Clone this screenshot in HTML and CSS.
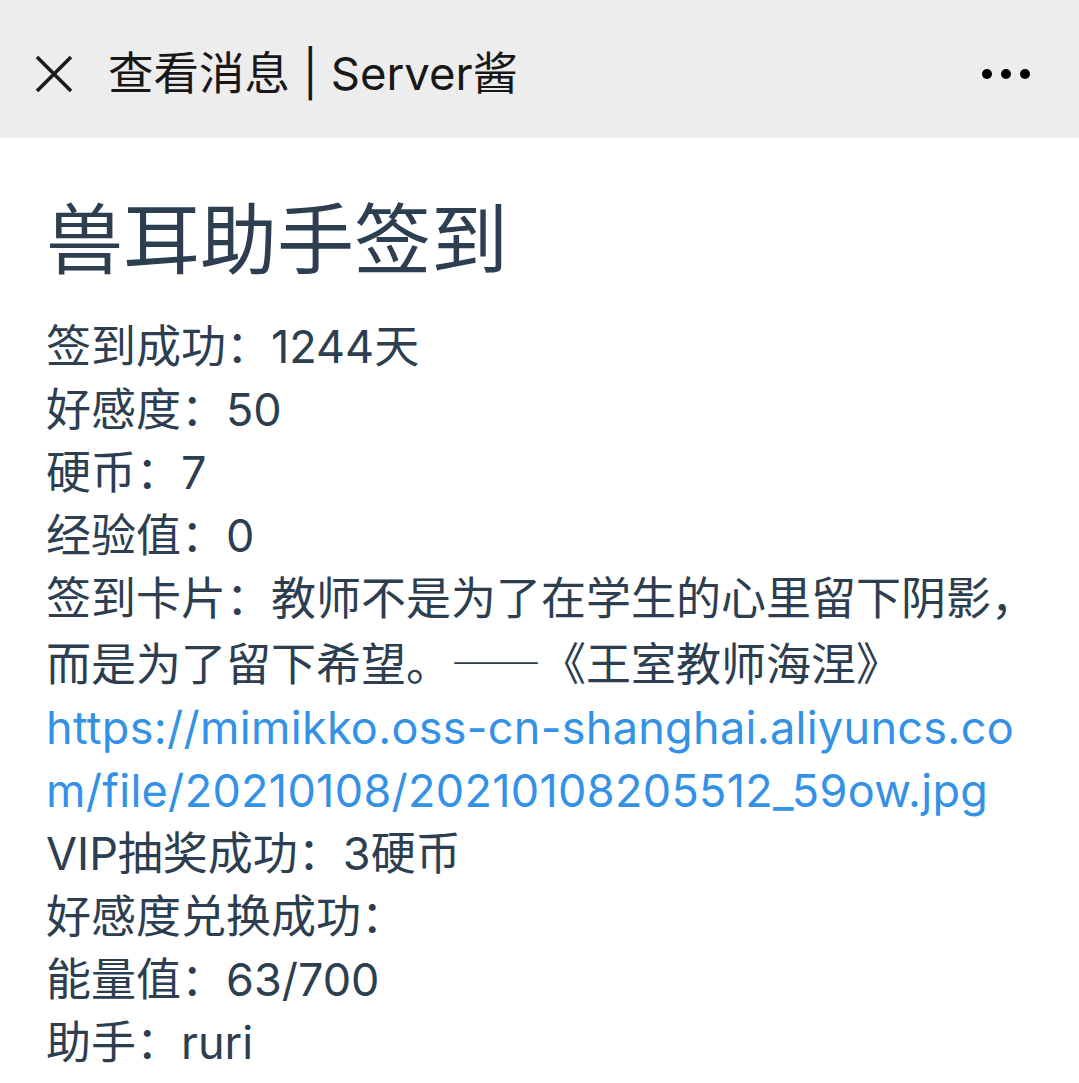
FILE: index.html
```html
<!DOCTYPE html>
<html lang="zh-CN">
<head>
<meta charset="utf-8">
<title>查看消息 | Server酱</title>
<link rel="stylesheet" href="styles.css">
</head>
<body>
<header class="topbar">
  <svg class="close-icon" width="38" height="38" viewBox="0 0 38 38" aria-hidden="true">
    <path d="M2 2 L36 36 M36 2 L2 36" stroke="#1a1a1a" stroke-width="3.6" fill="none"/>
  </svg>
  <span class="topbar-title">查看消息 | Server酱</span>
  <svg class="more-icon" width="50" height="12" viewBox="0 0 50 12" aria-hidden="true">
    <circle cx="6" cy="6" r="5" fill="#000"/>
    <circle cx="25" cy="6" r="5" fill="#000"/>
    <circle cx="44" cy="6" r="5" fill="#000"/>
  </svg>
</header>
<main class="content">
  <h1 class="msg-title">兽耳助手签到</h1>
  <div class="msg-body">
    <p class="line">签到成功：1244天</p>
    <p class="line">好感度：50</p>
    <p class="line">硬币：7</p>
    <p class="line">经验值：0</p>
    <p class="line">签到卡片：教师不是为了在学生的心里留下阴影，而是为了留下希望。<span class="cjk">——</span>《王室教师海涅》</p>
    <p class="line"><a class="link" href="#">https://mimikko.oss-cn-shanghai.aliyuncs.com/file/20210108/20210108205512_59ow.jpg</a></p>
    <p class="line">VIP抽奖成功：3硬币</p>
    <p class="line">好感度兑换成功：</p>
    <p class="line">能量值：63/700</p>
    <p class="line">助手：ruri</p>
  </div>
</main>
</body>
</html>
```
FILE: styles.css
```css
html, body {
  margin: 0;
  padding: 0;
  background: #ffffff;
}
body {
  font-family: Inter, "Noto Sans CJK SC", sans-serif;
  overflow: hidden;
  text-spacing-trim: space-all;
}
.topbar {
  height: 138px;
  background: #ededed;
  display: flex;
  align-items: center;
  padding: 10px 48px 0 35px;
  box-sizing: border-box;
}
.close-icon {
  flex: none;
  margin-right: 35px;
}
.topbar-title {
  flex: 1;
  font-size: 45.5px;
  color: #181818;
  line-height: 1;
}
.more-icon {
  flex: none;
}
.content {
  padding: 0 36px 0 46px;
  color: #2c3e50;
}
.msg-title {
  margin: 57px 0 29px;
  font-size: 77px;
  font-weight: 400;
  line-height: 91px;
}
.msg-body {
  font-size: 45px;
  line-height: 63px;
}
.line {
  margin: 0;
  word-break: break-all;
}
.cjk {
  font-family: "Noto Sans CJK SC", sans-serif;
}
.link {
  color: #3391e6;
  text-decoration: none;
  letter-spacing: 0.3px;
}
```
